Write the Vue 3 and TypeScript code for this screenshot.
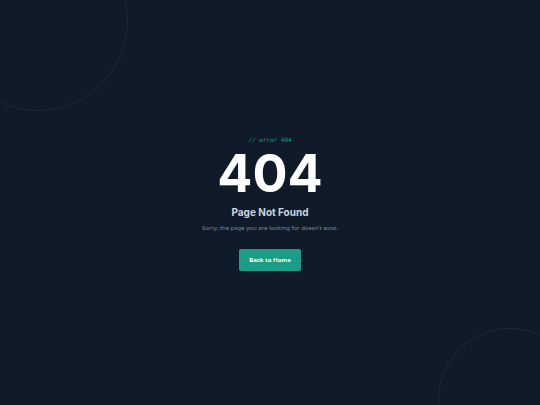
<script setup lang="ts">
const homeHref = '/'
</script>

<template>
  <main class="page">
    <span class="ring ring-top" aria-hidden="true"></span>
    <span class="ring ring-bottom" aria-hidden="true"></span>
    <section class="content">
      <p class="label">// error 404</p>
      <h1 class="code">404</h1>
      <h2 class="title">Page Not Found</h2>
      <p class="message">Sorry, the page you are looking for doesn't exist.</p>
      <a class="button" :href="homeHref">Back to Home</a>
    </section>
  </main>
</template>

<style>
body {
  margin: 0;
  background: #0f1b28;
}
</style>

<style scoped>
.page {
  position: relative;
  display: flex;
  align-items: center;
  justify-content: center;
  min-height: 100vh;
  overflow: hidden;
  background: #0f1b28;
  font-family: "Noto Sans", sans-serif;
}

.ring {
  position: absolute;
  box-sizing: border-box;
  border: 1px solid;
  border-radius: 50%;
}

.ring-top {
  top: -69px;
  left: -52px;
  width: 180px;
  height: 180px;
  border-color: #182b34;
}

.ring-bottom {
  right: -42px;
  bottom: -67px;
  width: 144px;
  height: 144px;
  border-color: #252733;
}

.content {
  display: flex;
  flex-direction: column;
  align-items: center;
  padding-top: 1px;
  text-align: center;
}

.label {
  margin: 0;
  color: #1b9a84;
  font: 6px/8px "DejaVu Sans Mono", monospace;
}

.code {
  margin: 4px 0 0;
  color: #ffffff;
  font: 700 52px/52px Inter, sans-serif;
}

.title {
  margin: 4px 0 0;
  color: #cbd5e1;
  font: 700 10px/16px Inter, sans-serif;
}

.message {
  margin: 4px 0 0;
  color: #7c8896;
  font-size: 6px;
  line-height: 8px;
}

.button {
  margin-top: 17px;
  padding: 7px 10px;
  border-radius: 2px;
  background: #1b9e87;
  color: #ffffff;
  font-size: 6px;
  font-weight: 700;
  line-height: 8px;
  text-decoration: none;
}
</style>
